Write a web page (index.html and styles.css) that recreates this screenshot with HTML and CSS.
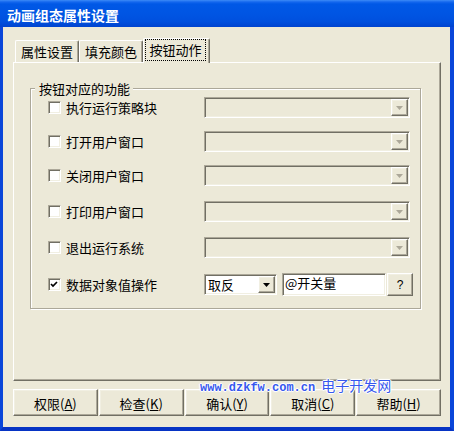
FILE: index.html
```html
<!DOCTYPE html>
<html lang="zh-CN">
<head>
<meta charset="utf-8">
<title>动画组态属性设置</title>
<link rel="stylesheet" href="styles.css">
</head>
<body>
<div class="window">
  <div class="titlebar"><span class="title">动画组态属性设置</span></div>
  <div class="client">
    <div class="tabs">
      <div class="tab">属性设置</div>
      <div class="tab">填充颜色</div>
      <div class="tab active"><span class="focus">按钮动作</span></div>
    </div>
    <div class="panel">
      <fieldset class="group">
        <legend>按钮对应的功能</legend>
        <div class="rows">
          <div class="row">
            <span class="chk"></span><span class="lbl">执行运行策略块</span>
            <div class="combo"><span class="dd"><svg width="7" height="4" viewBox="0 0 7 4"><polygon points="0,0 7,0 3.5,4" class="arr-dis"/></svg></span></div>
          </div>
          <div class="row">
            <span class="chk"></span><span class="lbl">打开用户窗口</span>
            <div class="combo"><span class="dd"><svg width="7" height="4" viewBox="0 0 7 4"><polygon points="0,0 7,0 3.5,4" class="arr-dis"/></svg></span></div>
          </div>
          <div class="row">
            <span class="chk"></span><span class="lbl">关闭用户窗口</span>
            <div class="combo"><span class="dd"><svg width="7" height="4" viewBox="0 0 7 4"><polygon points="0,0 7,0 3.5,4" class="arr-dis"/></svg></span></div>
          </div>
          <div class="row sp">
            <span class="chk"></span><span class="lbl">打印用户窗口</span>
            <div class="combo"><span class="dd"><svg width="7" height="4" viewBox="0 0 7 4"><polygon points="0,0 7,0 3.5,4" class="arr-dis"/></svg></span></div>
          </div>
          <div class="row sp">
            <span class="chk"></span><span class="lbl">退出运行系统</span>
            <div class="combo"><span class="dd"><svg width="7" height="4" viewBox="0 0 7 4"><polygon points="0,0 7,0 3.5,4" class="arr-dis"/></svg></span></div>
          </div>
          <div class="row sp last">
            <span class="chk"><svg width="9" height="9" viewBox="0 0 9 9"><path d="M1 4 L3 6 L7 2" class="tick"/></svg></span><span class="lbl">数据对象值操作</span>
            <div class="combo sel"><span class="val">取反</span><span class="dd"><svg width="7" height="4" viewBox="0 0 7 4"><polygon points="0,0 7,0 3.5,4" class="arr"/></svg></span></div>
            <div class="edit">@开关量</div>
            <div class="qbtn">?</div>
          </div>
        </div>
      </fieldset>
    </div>
    <div class="buttons">
      <div class="btn">权限(<u>A</u>)</div>
      <div class="btn">检查(<u>K</u>)</div>
      <div class="btn">确认(<u>Y</u>)</div>
      <div class="btn">取消(<u>C</u>)</div>
      <div class="btn">帮助(<u>H</u>)</div>
    </div>
  </div>
  <div class="watermark"><span class="wm-url">www.dzkfw.com.cn</span><span class="wm-cn">电子开发网</span></div>
</div>
</body>
</html>
```
FILE: styles.css
```css
* { box-sizing: border-box; }
html, body { margin: 0; padding: 0; }
body {
  width: 454px;
  height: 431px;
  overflow: hidden;
  background: #ECE9D8;
  font-family: "Noto Sans CJK SC", "Noto Sans", sans-serif;
  font-size: 13px;
  color: #000;
}
.window {
  position: relative;
  width: 454px;
  height: 431px;
  display: flex;
  flex-direction: column;
}
.titlebar {
  flex: none;
  height: 27px;
  padding: 2px 0 0 7px;
  display: flex;
  align-items: center;
  background: linear-gradient(to bottom, #3D8BF7 0, #1467EE 2px, #0058E6 4px, #0055E3 50%, #0050DE 80%, #0043CF 100%);
}
.title {
  color: #fff;
  font-weight: bold;
  font-size: 14px;
  line-height: 16px;
}
.client {
  flex: 1;
  background: #ECE9D8;
  border-left: 3px solid #0A46D9;
  border-right: 4px solid #0A46D9;
  border-bottom: 4px solid #0734C4;
  padding: 11px 9px 0 10px;
}
.tabs {
  display: flex;
  align-items: flex-end;
  height: 24px;
  padding-left: 2px;
  position: relative;
  z-index: 1;
}
.tab {
  width: 64px;
  height: 22px;
  border: 1px solid;
  border-color: #fff #716F64 transparent #fff;
  border-bottom: none;
  border-radius: 2px 2px 0 0;
  box-shadow: inset -1px 0 0 #ACA899;
  display: flex;
  align-items: center;
  justify-content: center;
  line-height: 15px;
  background: #ECE9D8;
}
.tab.active {
  width: 67px;
  height: 25px;
  margin-bottom: -1px;
  padding: 0 3px 2px 1px;
  align-items: stretch;
}
.focus {
  flex: 1;
  border: 1px dotted #000;
  display: flex;
  align-items: center;
  justify-content: center;
  padding-bottom: 1px;
}
.panel {
  width: 428px;
  height: 319px;
  border: 1px solid;
  border-color: #fff #716F64 #716F64 #fff;
  box-shadow: inset -1px -1px 0 #ACA899;
  padding: 0 0 0 16px;
}
.group {
  margin: 18px 0 0 0;
  width: 391px;
  height: 228px;
  border: 1px solid #ACA899;
  box-shadow: 1px 1px 0 #fff, inset 1px 1px 0 #fff;
  padding: 0;
  min-width: 0;
}
.group legend {
  margin-left: 4px;
  padding: 0 3px 0 4px;
  line-height: 15px;
  font-size: 13px;
  background: #ECE9D8;
}
.rows {
  padding: 1px 0 0 17px;
}
.row {
  display: flex;
  align-items: center;
  height: 21px;
}
.row + .row { margin-top: 13px; }
.row.sp { margin-top: 15px; }
.row.last { height: 23px; }
.chk, .combo, .edit {
  border: 1px solid;
  border-color: #ACA899 #fff #fff #ACA899;
  box-shadow: inset 1px 1px 0 #716F64, inset -1px -1px 0 #F1EFE2;
}
.chk {
  flex: none;
  width: 13px;
  height: 13px;
  background: #fff;
  margin-right: 5px;
  padding: 1px 0 0 1px;
  display: flex;
}
.tick {
  fill: none;
  stroke: #000;
  stroke-width: 1.7;
}
.lbl {
  width: 138px;
  line-height: 15px;
  white-space: nowrap;
}
.combo {
  flex: none;
  width: 206px;
  height: 21px;
  background: #ECE9D8;
  display: flex;
  align-items: center;
  justify-content: flex-end;
  padding: 2px 1px 2px 2px;
}
.combo.sel {
  width: 73px;
  background: #fff;
  justify-content: space-between;
}
.val {
  line-height: 15px;
  padding-left: 1px;
}
.dd, .qbtn, .btn {
  border: 1px solid;
  border-color: #fff #716F64 #716F64 #fff;
  box-shadow: inset -1px -1px 0 #ACA899, inset 1px 1px 0 #F1EFE2;
  background: #ECE9D8;
}
.dd {
  width: 17px;
  height: 17px;
  display: flex;
  align-items: center;
  justify-content: center;
  padding-top: 1px;
}
.arr { fill: #000; }
.arr-dis { fill: #ACA899; }
.edit {
  width: 104px;
  height: 23px;
  margin-left: 5px;
  background: #fff;
  padding: 1px 2px;
  line-height: 15px;
}
.qbtn {
  width: 26px;
  height: 23px;
  margin-left: 1px;
  display: flex;
  align-items: center;
  justify-content: center;
  font-family: "Liberation Sans", sans-serif;
  font-size: 12px;
}
.buttons {
  display: flex;
  gap: 1px;
  margin-top: 8px;
}
.btn {
  width: 85px;
  height: 27px;
  display: flex;
  align-items: center;
  justify-content: center;
  line-height: 15px;
  padding-top: 2px;
}
.btn u { text-underline-offset: 1px; }
.watermark {
  position: absolute;
  left: 200px;
  top: 377px;
  color: #3658EE;
  white-space: nowrap;
  text-shadow: 0 0 2px #fff, 1px 0 0 #fff, -1px 0 0 #fff, 0 1px 0 #fff, 0 -1px 0 #fff, 0 0 3px #fff;
  line-height: 16px;
  display: flex;
  align-items: baseline;
}
.wm-url {
  font-family: "Liberation Mono", monospace;
  font-size: 12px;
  font-weight: bold;
}
.wm-cn {
  font-size: 14px;
  margin-left: 6px;
}
```
